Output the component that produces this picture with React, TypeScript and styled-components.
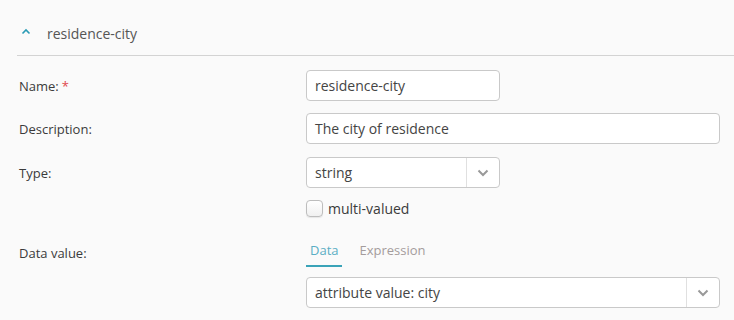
import React, { FC } from 'react';
import styled, { createGlobalStyle } from 'styled-components';

const GlobalStyle = createGlobalStyle`
  html, body {
    margin: 0;
    padding: 0;
    background: #fafafa;
    font-family: 'Open Sans', 'Noto Sans', sans-serif;
    color: #3b3b3b;
  }
`;

const Panel = styled.div`
  width: 734px;
  height: 320px;
  overflow: hidden;
  background: #fafafa;
`;

const Header = styled.div`
  display: flex;
  align-items: center;
  height: 56px;
  margin-left: 17px;
  padding-left: 4px;
  border-bottom: 1px solid #d3d3d3;
  box-sizing: border-box;
`;

const HeaderTitle = styled.span`
  margin-left: 16px;
  font-size: 14px;
  color: #555;
  margin-top: 12px;
`;

const ChevronUp = styled.svg`
  margin-top: 8px;
`;

const Form = styled.div`
  padding: 14px 14px 0 19px;
`;

const Row = styled.div<{ $gap?: number }>`
  display: grid;
  grid-template-columns: 287px 1fr;
  align-items: center;
  margin-bottom: ${p => (p.$gap ?? 12)}px;
`;

const Label = styled.label`
  font-size: 13px;
  color: #3b3b3b;
`;

const Required = styled.span`
  color: #e0474c;
  margin-left: 3px;
`;

const Input = styled.div<{ $width?: string }>`
  box-sizing: border-box;
  width: ${p => p.$width || '100%'};
  height: 31px;
  border: 1px solid #c9c9c9;
  border-radius: 4px;
  background: #fff;
  padding: 0 8px;
  display: flex;
  align-items: center;
  font-size: 14px;
  color: #444;
`;

const Select = styled.div<{ $width?: string }>`
  box-sizing: border-box;
  width: ${p => p.$width || '100%'};
  height: 31px;
  border: 1px solid #c9c9c9;
  border-radius: 4px;
  background: #fff;
  display: flex;
  align-items: stretch;
  font-size: 14px;
  color: #444;
`;

const SelectValue = styled.div`
  flex: 1;
  display: flex;
  align-items: center;
  padding: 0 8px;
`;

const SelectToggle = styled.div`
  width: 32px;
  border-left: 1px solid #e0e0e0;
  display: flex;
  align-items: center;
  justify-content: center;
`;

const CheckRow = styled.label`
  display: flex;
  align-items: center;
  gap: 5px;
  height: 17px;
  line-height: 17px;
  font-size: 14px;
  color: #3b3b3b;
`;

const Checkbox = styled.span`
  box-sizing: border-box;
  width: 17px;
  height: 17px;
  border: 1px solid #bdbdbd;
  border-radius: 4px;
  background: linear-gradient(#fff, #f0f0f0);
  box-shadow: 0 1px 1px rgba(0, 0, 0, 0.08);
`;

const Tabs = styled.div`
  display: flex;
  height: 28px;
`;

const Tab = styled.div<{ $active?: boolean }>`
  padding: 0 3px 0 4px;
  margin-right: 14px;
  font-size: 13px;
  line-height: 22px;
  color: ${p => (p.$active ? '#5aaec4' : '#a49c9c')};
  border-bottom: 2px solid ${p => (p.$active ? '#3aa3b8' : 'transparent')};
  box-sizing: border-box;
  height: 28px;
`;

const Caret: FC = () => (
  <svg width="12" height="8" viewBox="0 0 12 8">
    <path d="M1.5 1.5 L6 6 L10.5 1.5" fill="none" stroke="#999" strokeWidth="2" />
  </svg>
);

const App: FC = () => {
  return (
    <Panel>
      <GlobalStyle />
      <Header>
        <ChevronUp width="10" height="7" viewBox="0 0 10 7">
          <path d="M1.5 5.5 L5 2 L8.5 5.5" fill="none" stroke="#2a9bb5" strokeWidth="1.6" />
        </ChevronUp>
        <HeaderTitle>residence-city</HeaderTitle>
      </Header>
      <Form>
        <Row>
          <Label>
            Name:<Required>*</Required>
          </Label>
          <Input $width="194px">residence-city</Input>
        </Row>
        <Row $gap={13}>
          <Label>Description:</Label>
          <Input>The city of residence</Input>
        </Row>
        <Row>
          <Label>Type:</Label>
          <Select $width="194px">
            <SelectValue>string</SelectValue>
            <SelectToggle>
              <Caret />
            </SelectToggle>
          </Select>
        </Row>
        <Row $gap={22}>
          <span />
          <CheckRow>
            <Checkbox />
            multi-valued
          </CheckRow>
        </Row>
        <Row $gap={10}>
          <Label>Data value:</Label>
          <Tabs>
            <Tab $active>Data</Tab>
            <Tab>Expression</Tab>
          </Tabs>
        </Row>
        <Row>
          <span />
          <Select>
            <SelectValue>attribute value: city</SelectValue>
            <SelectToggle>
              <Caret />
            </SelectToggle>
          </Select>
        </Row>
      </Form>
    </Panel>
  );
};

export default App;
